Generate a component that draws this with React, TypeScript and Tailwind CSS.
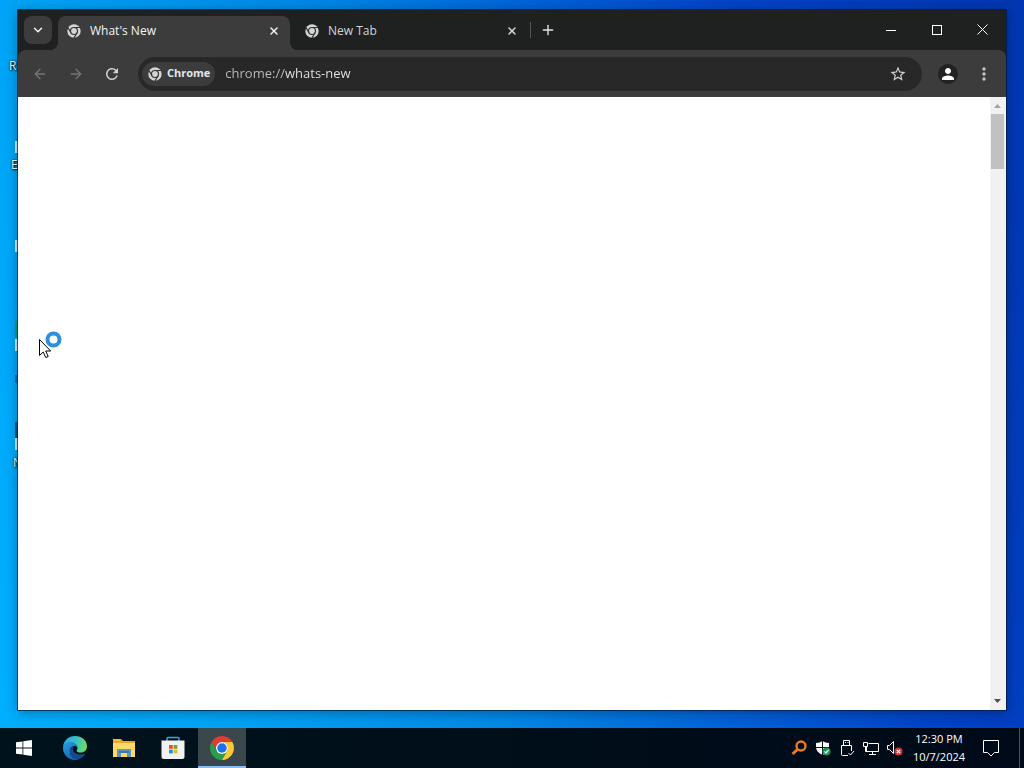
import type { ReactNode } from 'react';
import { ArrowLeft, ArrowRight, ChevronDown, Plus, X } from 'lucide-react';
import { MdOutlineStarBorder, MdPerson, MdRefresh, MdMoreVert } from 'react-icons/md';

const tabs = [
  { id: 'whats-new', title: "What's New", active: true },
  { id: 'new-tab', title: 'New Tab', active: false },
];

// Pieces of the desktop icons that stick out from behind the window
const desktopLabels = [
  { text: 'R', className: 'left-[9px] top-[58px]' },
  { text: 'E', className: 'left-[11px] top-[157px]' },
  { text: 'N', className: 'left-[13px] top-[455px]' },
];

const desktopShortcuts = [
  'top-[141px] h-3 bg-white/80',
  'top-[240px] h-3 bg-white/80',
  'top-[321px] h-4 bg-green-600/60',
  'top-[339px] h-3 bg-white/80',
  'top-[375px] h-2 bg-sky-900/50',
  'top-[422px] h-4 bg-sky-900/80',
  'top-[438px] h-3 bg-white/80',
];

function ChromeMono({ className }: { className?: string }) {
  return (
    <svg viewBox="0 0 48 48" className={className} aria-hidden="true">
      <circle cx="24" cy="24" r="23" fill="#d4d4d4" />
      <g fill="none" stroke="#333" strokeWidth="4">
        <circle cx="24" cy="24" r="12" />
        <path d="M24 12H45M13.6 30 3.2 12M34.4 30 24 48" />
      </g>
    </svg>
  );
}

function ChromeLogo() {
  return (
    <svg viewBox="0 0 48 48" className="size-6" aria-hidden="true">
      <path fill="#e33b2e" d="M24 12H44.78A24 24 0 0 0 3.22 12L13.61 30A12 12 0 0 1 24 12Z" />
      <path fill="#2a9f4a" d="M13.61 30 3.22 12A24 24 0 0 0 24 48L34.39 30A12 12 0 0 1 13.61 30Z" />
      <path fill="#fcc934" d="M34.39 30 24 48A24 24 0 0 0 44.78 12H24A12 12 0 0 1 34.39 30Z" />
      <circle cx="24" cy="24" r="12" fill="#fff" />
      <circle cx="24" cy="24" r="9.5" fill="#1a73e8" />
    </svg>
  );
}

function EdgeLogo() {
  return (
    <svg viewBox="0 0 24 24" className="size-6" aria-hidden="true">
      <defs>
        <linearGradient id="edge-top" x1="0" y1="0.3" x2="1" y2="0.5">
          <stop offset="0" stopColor="#2aa5e0" />
          <stop offset="0.5" stopColor="#35c1c9" />
          <stop offset="1" stopColor="#6fdc5c" />
        </linearGradient>
        <linearGradient id="edge-side" x1="0" y1="0" x2="0.6" y2="1">
          <stop offset="0" stopColor="#2a9fe0" />
          <stop offset="1" stopColor="#1064b8" />
        </linearGradient>
      </defs>
      <path fill="url(#edge-top)" d="M0 11C.6 4.6 5.600 0 12 0c7 0 12 4.800 12 10.200 0 4-3 6.300-6.400 6.300-2.600 0-4-.9-4-1.800 0-.6.9-1.100.9-2.800C14.500 8.600 11 6.500 7.600 6.500 4 6.500 1.200 8.600 0 11Z" />
      <path fill="url(#edge-side)" d="M0 12c.2-3.600 3.500-6 7.500-6 4 0 7 2.600 7 5.700-.9-1.300-2-1.700-3-1.700-2.900 0-4.600 2.400-4.600 5.200 0 4.400 3.600 8.200 8.300 8.200-1 .4-2.100.6-3.200.6C5.300 24 0 18.600 0 12Z" />
      <path fill="#154a91" d="M11.200 10C8.500 10.700 6.900 12.800 6.900 15.400c0 4.400 3.800 8.200 8.300 8 2.700-.9 5.200-2.800 6.700-5.200.3-.5-.1-.8-.6-.5-1 .5-2.300.8-3.700.8-4.200 0-7.600-2.200-7.600-5.500 0-1.200.4-2.200 1.200-3Z" />
    </svg>
  );
}

function ExplorerLogo() {
  return (
    <svg viewBox="0 0 24 24" className="size-6" aria-hidden="true">
      <path fill="#e8a825" d="M1 3h8l2 2h12v5H1z" />
      <path fill="#fbd867" d="M1 7h22v14H1z" />
      <path fill="#f3bd3c" d="M1 3h7v2H1z" />
      <path fill="#5b97bd" d="M5 13h14v8h-4v-4H9v4H5z" />
      <path fill="#3f78a3" d="M7 15h10v2H7z" />
    </svg>
  );
}

function StoreLogo() {
  return (
    <svg viewBox="0 0 24 24" className="size-6" aria-hidden="true">
      <path fill="none" stroke="#39a5dc" strokeWidth="1.500" d="M6 6V2.500Q6 1.500 7 1.500h10Q18 1.500 18 2.500V6" />
      <path fill="#f2f2f2" d="M.5 4.500h23v16Q23.500 23 21 23H3Q.5 23 .5 20.500Z" />
      <path fill="#e5502d" d="M8 9h3.800v3.800H8z" />
      <path fill="#6cab28" d="M12.600 9h3.800v3.800h-3.800z" />
      <path fill="#1a93d4" d="M8 13.600h3.800v3.800H8z" />
      <path fill="#f2b41e" d="M12.600 13.600h3.800v3.800h-3.800z" />
    </svg>
  );
}

function WindowsLogo() {
  return (
    <svg viewBox="0 0 16 16" className="size-4" fill="#fff" aria-hidden="true">
      <path d="M0 2.300 6.500 1.400v6.200H0zM7.300 1.300 16 0v7.600H7.300zM0 8.400h6.500v6.200L0 13.700zM7.300 8.400H16V16l-8.700-1.300z" />
    </svg>
  );
}

const trayIcons: { name: string; icon: ReactNode }[] = [
  {
    name: 'Search tool',
    icon: (
      <g fill="none" stroke="#f07820">
        <circle cx="10" cy="6" r="4.500" strokeWidth="2.400" />
        <path strokeWidth="3" d="M6.500 9.500 1.500 14" />
      </g>
    ),
  },
  {
    name: 'Windows Security',
    icon: (
      <>
        <path fill="#fff" d="M7.500 1Q10 3 14 3v4.500Q13.500 12 7.500 15 1.500 12 1 7.500V3Q5 3 7.500 1Z" />
        <path stroke="#06121c" d="M7.500 1v14M1 7.500h13" />
        <circle cx="11.500" cy="11.500" r="4" fill="#1e9455" />
        <path fill="none" stroke="#fff" strokeWidth="1.200" d="m9.500 11.500 1.500 1.500 2.500-3" />
      </>
    ),
  },
  {
    name: 'Safely Remove Hardware',
    icon: (
      <g fill="none" stroke="#fff">
        <path d="M4.500 5.500v-5h6v5M9 15.500H3.500Q2.500 15.500 2.500 14.500v-9h10V11" />
        <path d="M6 2.500h1M8.500 2.500h1M9.500 13l2 2 3.500-4" />
      </g>
    ),
  },
  {
    name: 'Network',
    icon: (
      <g fill="none" stroke="#fff">
        <path d="M5.500 3.500h10v8h-12V7M9.500 11.500v3M6 14.500h7" />
        <path d="M.5 2.500h4v4h-4zM2.500 6.500v5h2" />
      </g>
    ),
  },
  {
    name: 'Volume muted',
    icon: (
      <>
        <path fill="none" stroke="#fff" d="M.5 5.500h2l4-4v12l-4-4h-2z" />
        <circle cx="11.500" cy="11.500" r="4" fill="#d13438" />
        <path stroke="#fff" strokeWidth="1.200" d="m9.800 9.800 3.400 3.400M13.200 9.800l-3.400 3.400" />
      </>
    ),
  },
];

const apps = [
  { name: 'Microsoft Edge', icon: <EdgeLogo />, active: false },
  { name: 'File Explorer', icon: <ExplorerLogo />, active: false },
  { name: 'Microsoft Store', icon: <StoreLogo />, active: false },
  { name: 'Google Chrome', icon: <ChromeLogo />, active: true },
];

function TabStrip() {
  return (
    <div className="flex h-10 items-center bg-[#1f2020] pl-1.5">
      <button aria-label="Search tabs" className="flex size-7 items-center justify-center rounded-lg bg-[#3c3c3c] text-gray-100">
        <ChevronDown className="size-3.5" strokeWidth={2.5} />
      </button>
      <div className="ml-1.5 flex gap-1.5 self-end" role="tablist">
        {tabs.map((tab) => (
          <div
            key={tab.id}
            className={`relative flex h-[34px] w-[232px] items-center gap-2 px-2 pb-1 ${
              tab.active
                ? 'rounded-t-lg bg-[#3c3c3c] text-gray-100 before:absolute before:-left-2 before:bottom-0 before:size-2 before:bg-[radial-gradient(circle_at_0_0,transparent_8px,#3c3c3c_8px)] after:absolute after:-right-2 after:bottom-0 after:size-2 after:bg-[radial-gradient(circle_at_100%_0,transparent_8px,#3c3c3c_8px)]'
                : 'text-gray-300'
            }`}
          >
            <ChromeMono className="size-4 p-px" />
            <button role="tab" aria-selected={tab.active} className="flex-1 text-left text-xs">
              {tab.title}
            </button>
            <button aria-label={`Close ${tab.title}`} className="flex size-4 items-center justify-center">
              <X className="size-3" strokeWidth={3} />
            </button>
          </div>
        ))}
      </div>
      <div className="ml-0.5 h-4 w-px bg-[#555]" />
      <button aria-label="New tab" className="ml-[3px] flex size-7 items-center justify-center text-gray-200">
        <Plus className="size-4" />
      </button>
      <div className="ml-auto flex self-stretch text-white">
        <button aria-label="Minimize" className="flex w-[46px] items-center justify-center">
          <span className="h-px w-2.5 bg-white" />
        </button>
        <button aria-label="Maximize" className="flex w-[46px] items-center justify-center">
          <span className="size-2.5 border border-white" />
        </button>
        <button aria-label="Close" className="flex w-[46px] items-center justify-center">
          <svg viewBox="0 0 12 12" className="size-3" stroke="currentColor" aria-hidden="true">
            <path d="m.5.5 10 10M10.500.5l-10 10" />
          </svg>
        </button>
      </div>
    </div>
  );
}

function Toolbar() {
  return (
    <div className="bg-[#1f2020]">
      <div className="flex h-[47px] items-center rounded-t-lg bg-[#3c3c3c] px-2">
        <div className="flex gap-2">
          <button aria-label="Back" className="flex size-7 items-center justify-center text-[#757575]">
            <ArrowLeft className="size-4" />
          </button>
          <button aria-label="Forward" className="flex size-7 items-center justify-center text-[#757575]">
            <ArrowRight className="size-4" />
          </button>
          <button aria-label="Reload" className="flex size-7 items-center justify-center text-[#d0d0d0]">
            <MdRefresh className="size-[18px]" />
          </button>
        </div>
        <div className="mx-3 flex h-[34px] flex-1 items-center rounded-full bg-[#282828] pr-3.5 pl-1">
          <button className="flex h-6 items-center gap-1 rounded-full bg-[#3c3c3c] px-[5px] text-[11px] font-bold text-gray-200">
            <ChromeMono className="size-4 p-px" />
            Chrome
          </button>
          <input
            type="text"
            aria-label="Address and search bar"
            defaultValue="chrome://whats-new"
            className="ml-2.5 min-w-0 flex-1 bg-[linear-gradient(to_right,#bdbdbd_60px,#e8e8e8_60px)] bg-clip-text text-[13px] text-transparent outline-none"
          />
          <button aria-label="Bookmark this tab" className="flex size-5 items-center justify-center text-[#d0d0d0]">
            <MdOutlineStarBorder className="size-[18px]" />
          </button>
        </div>
        <div className="flex gap-2">
          <button aria-label="Profile" className="flex size-7 items-center justify-center">
            <span className="flex size-5 items-center justify-center rounded-full bg-[#222] text-white">
              <MdPerson className="size-[18px]" />
            </span>
          </button>
          <button aria-label="Customize and control Google Chrome" className="flex size-7 items-center justify-center text-[#c4c4c4]">
            <MdMoreVert className="size-5" />
          </button>
        </div>
      </div>
    </div>
  );
}

function BrowserWindow() {
  return (
    <section className="relative flex flex-1 flex-col shadow-[0_0_0_1px_rgba(0,25,60,0.7),0_2px_12px_rgba(0,0,0,0.35)]">
      <TabStrip />
      <Toolbar />
      <div className="flex flex-1 bg-white">
        <main className="flex-1" />
        <div className="flex w-4 flex-col bg-[#f1f1f1]">
          <svg viewBox="0 0 16 17" className="h-[17px] w-4" fill="#a3a3a3" aria-hidden="true">
            <path d="M4 11 7.500 7 11 11z" />
          </svg>
          <div className="ml-px h-[55px] w-[13px] bg-[#c1c1c1]" />
          <svg viewBox="0 0 16 17" className="mt-auto h-[17px] w-4" fill="#505050" aria-hidden="true">
            <path d="M4 6 7.500 10 11 6z" />
          </svg>
        </div>
      </div>
    </section>
  );
}

function Taskbar() {
  return (
    <footer className="flex h-10 bg-linear-to-r from-[#00131c] to-[#000a18] text-white">
      <button aria-label="Start" className="flex w-12 items-center justify-center">
        <WindowsLogo />
      </button>
      <nav className="ml-[3px] flex gap-px">
        {apps.map((app) => (
          <button
            key={app.name}
            aria-label={app.name}
            className={`flex w-12 items-center justify-center border-b-2 pt-0.5 ${
              app.active ? 'border-[#86bdf0] bg-[#3a474d]' : 'border-transparent'
            }`}
          >
            {app.icon}
          </button>
        ))}
      </nav>
      <div className="ml-auto flex">
        {trayIcons.map((item) => (
          <button key={item.name} aria-label={item.name} className="flex w-6 items-center justify-center">
            <svg viewBox="0 0 16 16" className="size-4" aria-hidden="true">
              {item.icon}
            </svg>
          </button>
        ))}
        <button className="flex w-16 flex-col items-center justify-center text-[11px] leading-[18px]">
          <span>12:30 PM</span>
          <span>10/7/2024</span>
        </button>
        <button aria-label="Notifications" className="flex w-10 items-center justify-center">
          <svg viewBox="0 0 18 18" className="size-[18px]" fill="none" stroke="#fff" aria-hidden="true">
            <path d="M1.500 1.500h15v12h-4l-3.500 3.500-3.500-3.500h-4z" />
          </svg>
        </button>
        <button aria-label="Show desktop" className="ml-2 w-[5px] border-l border-gray-600" />
      </div>
    </footer>
  );
}

function BusyCursor() {
  return (
    <svg viewBox="0 0 24 28" className="pointer-events-none absolute top-[331px] left-[39px] h-7 w-6" aria-hidden="true">
      <path fill="#fff" stroke="#000" d="M.5 8.500v16l3.700-3.500 2.500 5.500 2.500-1-2.500-5.500h5z" />
      <circle cx="14.500" cy="8.500" r="6" fill="#fff" stroke="#2f8fdd" strokeWidth="4" />
    </svg>
  );
}

export default function App() {
  return (
    <div className="relative flex min-h-screen flex-col overflow-hidden bg-[linear-gradient(75deg,#00b0ff,#00a2f5_20%,#0088e6_42%,#0062d8_60%,#0044c8_76%,#0036b0)] font-['Open_Sans','Noto_Sans',sans-serif]">
      {desktopShortcuts.map((shortcut) => (
        <div key={shortcut} className={`absolute left-[15px] w-2 ${shortcut}`} />
      ))}
      {desktopLabels.map((label) => (
        <span
          key={label.text}
          className={`absolute text-xs text-white [text-shadow:1px_1px_2px_#000,0_0_2px_#000] ${label.className}`}
        >
          {label.text}
        </span>
      ))}
      <div className="flex flex-1 flex-col px-[18px] pt-2.5 pb-[18px]">
        <BrowserWindow />
      </div>
      <Taskbar />
      <BusyCursor />
    </div>
  );
}
